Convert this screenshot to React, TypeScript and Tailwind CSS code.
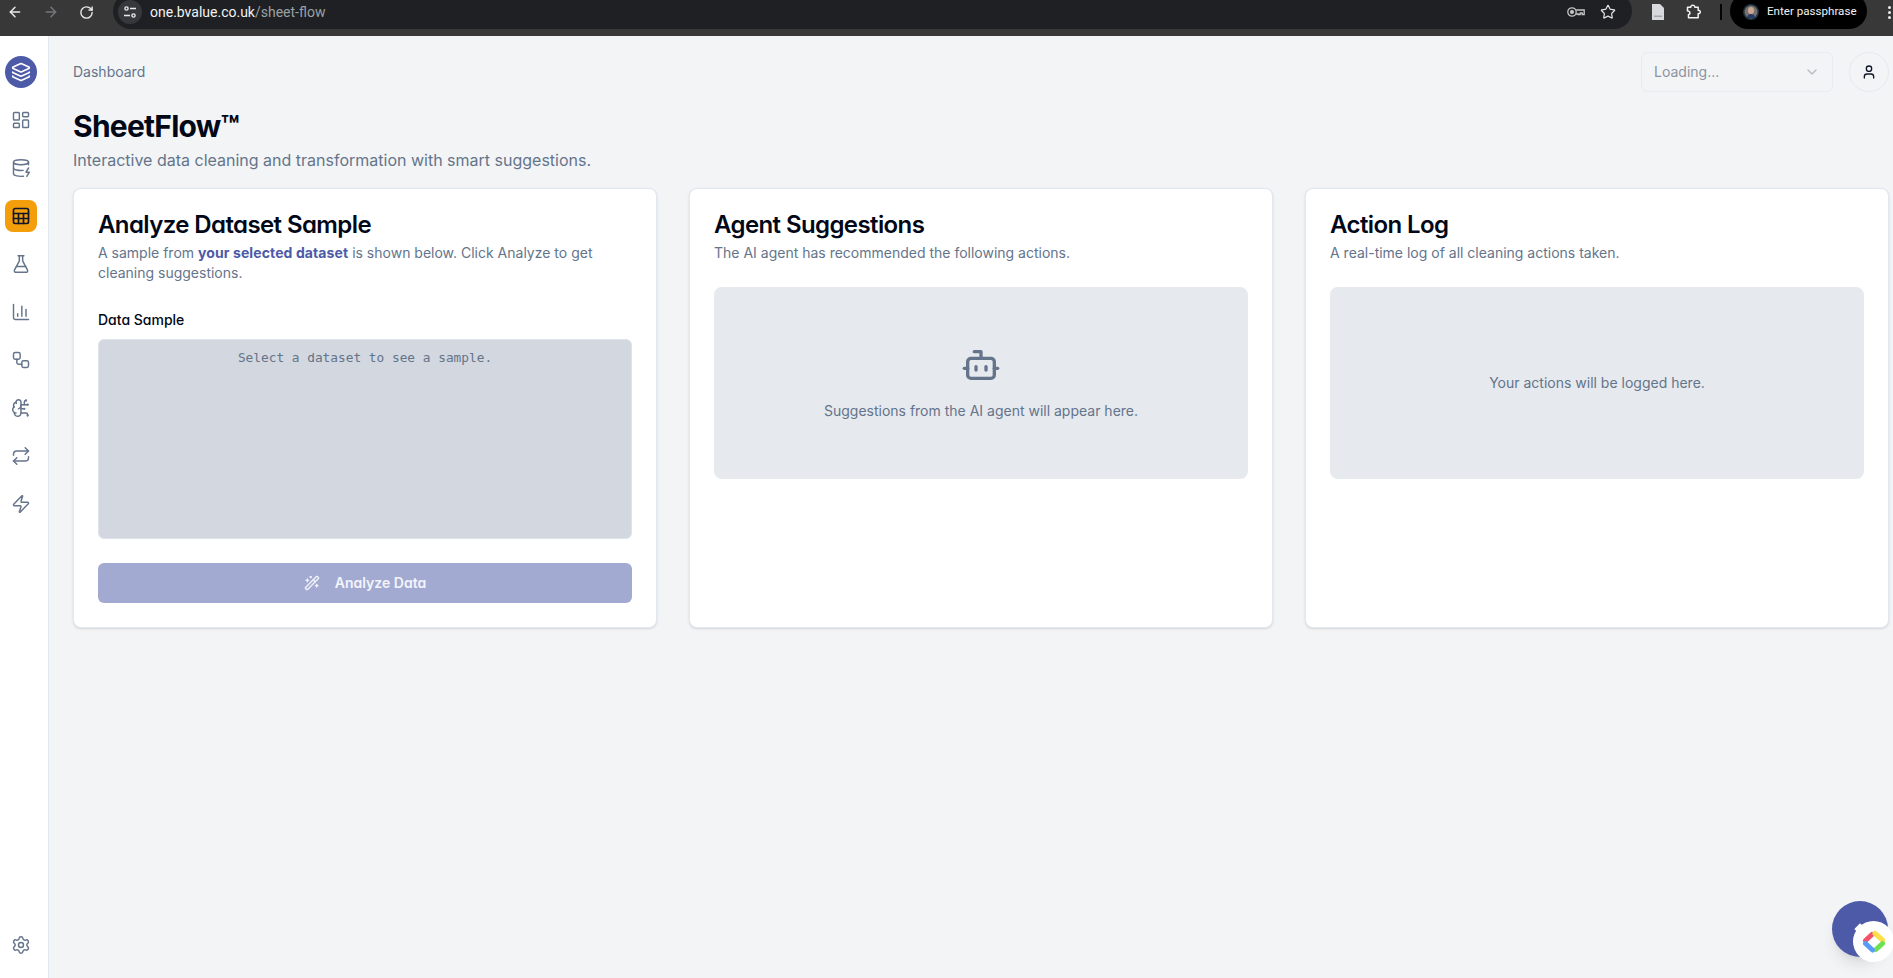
import React from "react";
import {
  ArrowLeft, ArrowRight, RotateCw, Star, Layers, LayoutDashboard, DatabaseZap, Sheet, FlaskConical,
  ChartColumn, Workflow, BrainCircuit, Repeat, Zap, Settings, Bot, WandSparkles, User, ChevronDown,
} from "lucide-react";

const navIcons = [LayoutDashboard, DatabaseZap, Sheet, FlaskConical, ChartColumn, Workflow, BrainCircuit, Repeat, Zap];

function BrowserBar() {
  return (
    <div className="h-[36px] shrink-0 bg-[#383838] text-white">
      <div className="h-[29px] w-full flex items-start overflow-hidden">
        <div className="flex items-center h-[24px] pl-[7px] gap-[20px] w-[113px] shrink-0">
          <ArrowLeft size={16} strokeWidth={2.2} className="text-[#e8eaed]" />
          <ArrowRight size={16} strokeWidth={2.2} className="text-[#74767a]" />
          <RotateCw size={15} strokeWidth={2.2} className="text-[#e8eaed]" />
        </div>
        <div className="w-[1519px] h-[36px] -mt-[7px] pt-[2px] shrink-0 rounded-[18px] bg-[#1f2023] flex items-center pl-[5px]">
          <div className="w-[24px] h-[24px] rounded-full bg-[#37383b] flex items-center justify-center">
            <svg width="14" height="14" viewBox="0 0 14 14" fill="none" stroke="#e8eaed" strokeWidth="1.4">
              <circle cx="3.5" cy="3.5" r="1.6" />
              <path d="M7 3.5h6M1 10.5h6" />
              <circle cx="10.5" cy="10.5" r="1.6" />
            </svg>
          </div>
          <span className="ml-[8px] text-[14px] font-['Roboto',sans-serif] text-[#f1f3f4]">
            one.bvalue.co.uk<span className="text-[#9aa0a6]">/sheet-flow</span>
          </span>
          <div className="ml-auto flex items-center gap-[15px] pr-[16px]">
            <svg width="18" height="12" viewBox="0 0 18 12" fill="none" stroke="#c4c7c5" strokeWidth="1.3">
              <circle cx="5" cy="6" r="4.2" />
              <circle cx="5" cy="6" r="1.4" fill="#c4c7c5" />
              <path d="M9.2 4h8v4.5h-2V7h-2v1.5h-2V8H9" />
            </svg>
            <Star size={16} strokeWidth={1.8} className="text-[#e3e3e3]" />
          </div>
        </div>
        <div className="h-[24px] flex items-center shrink-0">
          <svg width="14" height="16" viewBox="0 0 14 16" className="ml-[19px] shrink-0">
            <path d="M1 0h8l4 4v12H1z" fill="#d7d9dc" />
            <path d="M3 11.5h8V13H3z" fill="#a5a7aa" />
          </svg>
          <svg width="17" height="16" viewBox="0 0 17 16" fill="none" stroke="#f1f3f4" strokeWidth="1.5" strokeLinejoin="round" className="ml-[21px] shrink-0">
            <path d="M1.5 3.2h3.3c-.4-2.6 4.4-2.6 4 0h3.4v3.2c2.8-.4 2.8 3.6 0 3.2v4.2H2.5v-3.3c1.9.1 2.1-3.2-.2-3.6-.3-.1-.5-.1-.8 0z" />
          </svg>
          <div className="ml-[17px] w-[2px] h-[16px] bg-[#050505] shrink-0" />
        </div>
        <div className="ml-[8px] h-[36px] -mt-[7px] pt-[2px] w-[137px] shrink-0 rounded-[18px] bg-black flex items-center pl-[13px] gap-[8px]">
          <svg width="16" height="16" viewBox="0 0 16 16" className="shrink-0">
            <circle cx="8" cy="8" r="8" fill="#1d3340" />
            <circle cx="8" cy="8" r="6.5" fill="#77706d" />
            <ellipse cx="8" cy="6.5" rx="3" ry="3.5" fill="#c9a793" />
            <path d="M4 14c0-3 2-4 4-4s4 1 4 4z" fill="#263a69" />
          </svg>
          <span className="text-[11.6px] font-['Roboto',sans-serif] whitespace-nowrap text-[#f1f3f4]">Enter passphrase</span>
        </div>
        <div className="ml-[21px] h-[24px] flex flex-col justify-center gap-[2px] shrink-0">
          <div className="w-[3px] h-[3px] rounded-full bg-[#e8eaed]" />
          <div className="w-[3px] h-[3px] rounded-full bg-[#e8eaed]" />
          <div className="w-[3px] h-[3px] rounded-full bg-[#e8eaed]" />
        </div>
      </div>
    </div>
  );
}

function Sidebar() {
  return (
    <aside className="w-[49px] shrink-0 bg-white border-r border-[#e2e8f0] flex flex-col items-start pl-[5px] pt-[20px] pb-[23px]">
      <div className="w-[32px] h-[32px] rounded-full bg-[#4c5aa8] flex items-center justify-center text-white">
        <Layers size={20} />
      </div>
      <nav className="mt-[16px] flex flex-col gap-[16px]">
        {navIcons.map((Icon, i) => (
          <div
            key={i}
            className={
              i === 2
                ? "w-[32px] h-[32px] rounded-lg bg-[#f59e0b] flex items-center justify-center text-[#0f172a]"
                : "w-[32px] h-[32px] rounded-lg flex items-center justify-center text-[#64748b]"
            }
          >
            <Icon size={20} strokeWidth={i === 2 ? 2 : 1.75} />
          </div>
        ))}
      </nav>
      <Settings size={20} strokeWidth={1.75} className="mt-auto ml-[6px] text-[#64748b]" />
    </aside>
  );
}

function Card({ title, desc, alt, children }: { title: string; desc: React.ReactNode; alt?: boolean; children: React.ReactNode }) {
  return (
    <section className="bg-white rounded-lg border border-[#e2e8f0] shadow-sm p-[24px] flex flex-col min-w-0">
      <h2
        className={
          alt
            ? "text-2xl font-semibold leading-[24px] tracking-tight text-[#020817] [font-feature-settings:'cv11']"
            : "text-2xl font-semibold leading-[24px] tracking-tight text-[#020817]"
        }
      >
        {title}
      </h2>
      <p className="mt-[6px] text-sm text-[#64748b] leading-[20px]">{desc}</p>
      {children}
    </section>
  );
}

export default function App() {
  return (
    <div className="h-[978px] w-[1893px] overflow-hidden flex flex-col bg-[#f3f4f6] font-['Inter',sans-serif]">
      <BrowserBar />
      <div className="flex-1 flex min-h-0 relative">
        <Sidebar />
        <main className="flex-1 min-w-0 pl-[24px] pr-[4px] pt-[16px]">
          <header className="h-[40px] flex items-center">
            <span className="text-sm text-[#64748b]">Dashboard</span>
            <div className="ml-auto w-[192px] h-[40px] rounded-md border border-[#e9ebf0] flex items-center justify-between px-[12px] text-sm text-[#8d93a1]">
              <span>Loading...</span>
              <ChevronDown size={16} className="text-[#b6bac3]" />
            </div>
            <div className="ml-[16px] w-[40px] h-[40px] rounded-full border border-[#e6e9f0] flex items-center justify-center text-[#0f172a]">
              <User size={16} />
            </div>
          </header>
          <h1 className="mt-[16px] text-3xl font-bold leading-[36px] tracking-tight text-[#020817]">SheetFlow™</h1>
          <p className="mt-[4px] text-base leading-[24px] text-[#64748b]">
            Interactive data cleaning and transformation with smart suggestions.
          </p>
          <div className="mt-[16px] grid grid-cols-3 gap-[32px]">
            <Card
              alt
              title="Analyze Dataset Sample"
              desc={
                <>
                  A sample from <span className="font-bold tracking-[0.1px] text-[#4c5aa8]">your selected dataset</span> is shown below. Click Analyze to get cleaning suggestions.
                </>
              }
            >
              <div className="mt-[27px] text-sm font-medium leading-[20px] text-[#020817] [font-feature-settings:'cv11']">Data Sample</div>
              <div className="mt-[9px] h-[200px] rounded-md bg-[#d3d7df] border border-[#dfe4ea] pt-[9px] text-center text-[12.8px] leading-[18px] text-[#64748b] font-['DejaVu_Sans_Mono',monospace]">
                Select a dataset to see a sample.
              </div>
              <div className="mt-[24px] h-[40px] rounded-md bg-[#a3aad2] flex items-center justify-center gap-[15px] text-sm font-semibold text-[#f3f4fb] [font-feature-settings:'cv11']">
                <WandSparkles size={16} />
                <span>Analyze Data</span>
              </div>
            </Card>
            <Card title="Agent Suggestions" desc="The AI agent has recommended the following actions.">
              <div className="mt-[24px] h-[192px] rounded-lg bg-[#e6e9ed] flex flex-col items-center justify-center text-sm text-[#64748b]">
                <Bot size={40} strokeWidth={2} className="text-[#64748b]" />
                <span className="mt-[16px]">Suggestions from the AI agent will appear here.</span>
              </div>
            </Card>
            <Card title="Action Log" desc="A real-time log of all cleaning actions taken.">
              <div className="mt-[24px] h-[192px] rounded-lg bg-[#e6e9ed] flex items-center justify-center text-sm text-[#64748b]">
                Your actions will be logged here.
              </div>
            </Card>
          </div>
        </main>
        <div className="absolute right-[5px] bottom-[21px] w-[56px] h-[56px] rounded-full bg-[#4c5aa8] shadow-lg flex items-center justify-center">
          <div className="w-[8px] h-[8px] rotate-45 bg-white" />
        </div>
        <div className="absolute right-[-1px] bottom-[16px] w-[41px] h-[41px] rounded-full bg-white flex items-center justify-center">
          <svg width="24" height="24" viewBox="0 0 24 24" fill="none" strokeWidth="5" strokeLinecap="round">
            <path d="M3.5 10.5 L10 4.5" stroke="#f4526a" />
            <path d="M13 3.5 L20.5 10" stroke="#fde047" />
            <path d="M20.5 13.5 L14 19.5" stroke="#6fe04f" />
            <path d="M10.5 20 L3.5 13.5" stroke="#5b9bf8" />
          </svg>
        </div>
      </div>
    </div>
  );
}
